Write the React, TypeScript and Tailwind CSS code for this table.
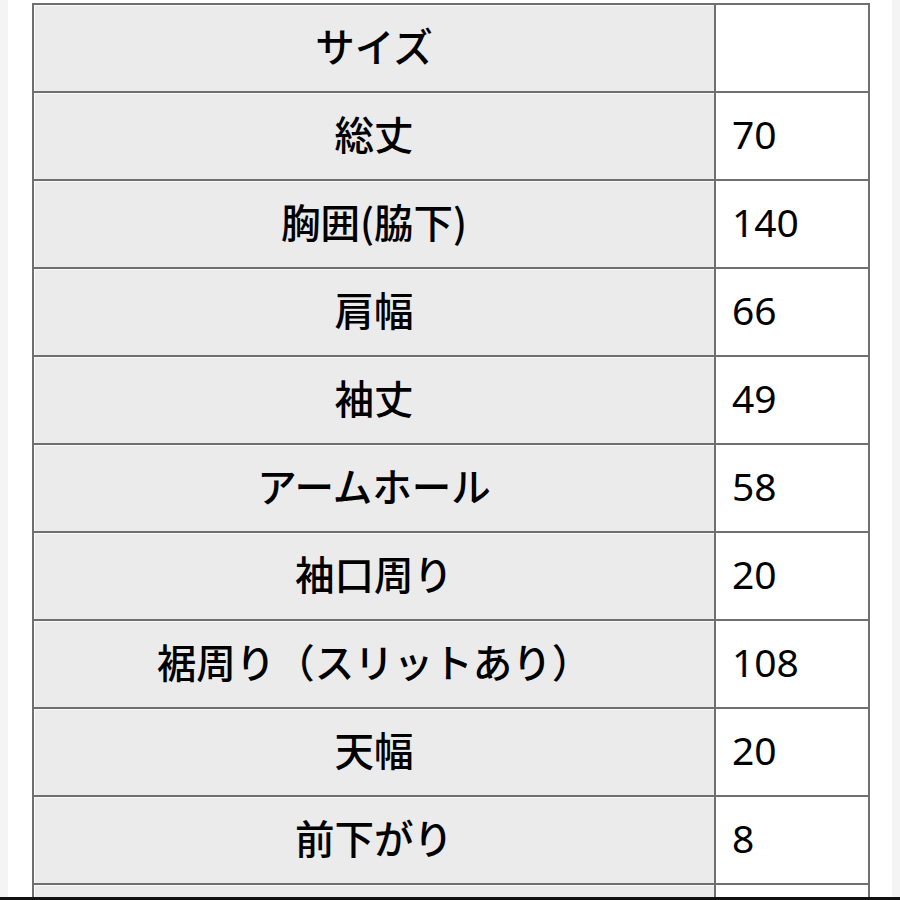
import React from "react";

const rows: [string, string][] = [
  ["サイズ", ""],
  ["総丈", "70"],
  ["胸囲(脇下)", "140"],
  ["肩幅", "66"],
  ["袖丈", "49"],
  ["アームホール", "58"],
  ["袖口周り", "20"],
  ["裾周り（スリットあり）", "108"],
  ["天幅", "20"],
  ["前下がり", "8"],
  ["", ""],
];

const App = () => {
  return (
    <div
      className="relative h-[900px] w-[900px] overflow-hidden bg-white text-black"
      style={{ fontFamily: '"Noto Sans CJK JP", "Noto Sans", sans-serif' }}
    >
      <div className="flex h-full">
        <div className="w-2 shrink-0 bg-[#f4f4f4]" />
        <div className="flex-1 pl-6 pr-[22px] pt-[3px]">
          <table className="w-full border-collapse border-2 border-[#6f6f6f] leading-none">
            <tbody>
              {rows.map(([label, value], i) => (
                <tr key={i} className="h-[88px]">
                  <th className="w-[682px] border-2 border-[#6f6f6f] bg-[#ebebeb] pb-[6px] text-center text-[39.5px] font-medium shadow-[inset_1px_1px_0_#f8f8f8]">
                    {label}
                  </th>
                  <td className="border-2 border-[#6f6f6f] bg-white pb-[6px] pl-4 text-left font-['Noto_Sans',sans-serif] text-[39px] font-normal">
                    {value}
                  </td>
                </tr>
              ))}
            </tbody>
          </table>
        </div>
        <div className="w-2 shrink-0 bg-[#f4f4f4]" />
      </div>
      <div className="absolute bottom-0 left-0 h-[3px] w-full bg-[#111]" />
    </div>
  );
};

export default App;
